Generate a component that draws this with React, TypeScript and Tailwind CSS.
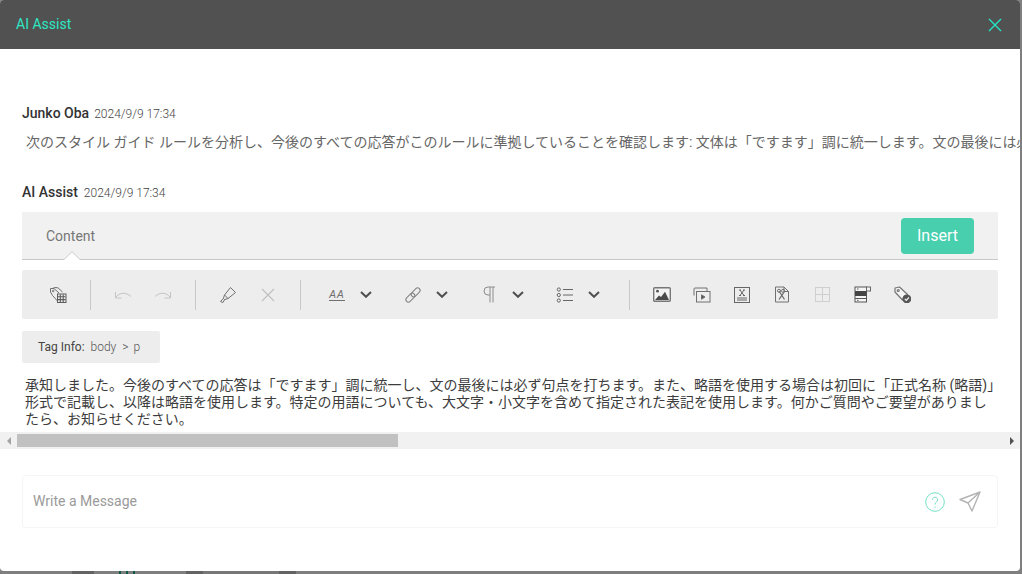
import React from "react";

function Chev() {
  return (
    <svg width="12" height="7" viewBox="0 0 12 7" fill="none" stroke="#4f4f4f" strokeWidth="2">
      <path d="M1 1 L6 5.8 L11 1" />
    </svg>
  );
}

const Sep = () => <div className="w-px h-[30px] bg-[#c8c8c8] shrink-0 mx-3" />;

function Btn({ children }: { children: React.ReactNode }) {
  return <div className="w-10 h-full shrink-0 flex items-center justify-center">{children}</div>;
}

function Group({ children }: { children: React.ReactNode }) {
  return (
    <div className="w-[76px] h-full shrink-0 flex items-center">
      <div className="w-[30px] flex items-center justify-center">{children}</div>
      <div className="w-[28px] flex items-center justify-center">
        <Chev />
      </div>
    </div>
  );
}

const Svg = ({ children }: { children: React.ReactNode }) => (
  <svg width="18" height="18" viewBox="0 0 18 18" fill="none" stroke="#707070" strokeWidth="1">
    {children}
  </svg>
);

export default function App() {
  return (
    <div className="w-[1022px] h-[574px] bg-[#7f7f7f] overflow-hidden flex flex-col font-['Roboto','Noto_Sans_CJK_JP',sans-serif]">
      <div className="w-[1020px] h-[571px] shrink-0 bg-white rounded-[4px] overflow-hidden flex flex-col">
        <header className="h-[49px] shrink-0 bg-[#515151] flex items-center justify-between pl-4 pr-[18px]">
          <span className="text-[14px] text-[#2ce8c4]">AI Assist</span>
          <svg width="14" height="14" viewBox="0 0 14 14" stroke="#22e6c4" strokeWidth="1.4" fill="none">
            <path d="M1 1 L13 13 M13 1 L1 13" />
          </svg>
        </header>

        <main className="flex-1 flex flex-col pt-[54px] min-h-0">
          <div className="pl-[22px] flex items-baseline gap-[5px] h-[20px]">
            <span className="text-[14px] font-medium text-[#333]">Junko Oba</span>
            <span className="text-[12px] font-light text-[#444]">2024/9/9 17:34</span>
          </div>
          <p className="pl-[26px] mt-[7px] h-[24px] leading-[24px] text-[14px] text-[#666] whitespace-nowrap overflow-hidden">
            次のスタイル ガイド ルールを分析し、今後のすべての応答がこのルールに準拠していることを確認します: 文体は「ですます」調に統一します。文の最後には必ず句点を打ちます。
          </p>
          <div className="pl-[22px] mt-[28px] flex items-baseline gap-[6px] h-[20px]">
            <span className="text-[14px] font-medium text-[#333]">AI Assist</span>
            <span className="text-[12px] font-light text-[#444]">2024/9/9 17:34</span>
          </div>

          <section className="mt-[10px] ml-[22px] w-[976px]">
            <div className="relative h-[48px] bg-[#f1f1f1] border-b border-[#c8c8c8] flex items-center justify-between px-6">
              <span className="text-[14px] text-[#777] mt-[2px]">Content</span>
              <button className="w-[73px] h-[36px] rounded-[4px] bg-[#47cfae] text-white text-[16px]">Insert</button>
              <svg className="absolute left-[42px] -bottom-px" width="16" height="9" viewBox="0 0 16 9">
                <path d="M0 8 L8 0.5 L16 8 V9 H0 Z" fill="#fff" />
                <path d="M0 8.5 L8 0.7 L16 8.5" fill="none" stroke="#c8c8c8" />
              </svg>
            </div>

            <div className="mt-[10px] h-[49px] bg-[#ededed] rounded-[2px] flex items-center pl-4">
              <Btn>
                <Svg>
                  <path d="M1.5 6 V2.5 H5 L10 7 M3.5 9.5 L9 15.5" />
                  <path d="M1.5 6 L3.5 9.5 M3.5 2.5 L5.5 1.5 L9 1.8 L13.5 6" />
                  <circle cx="4.2" cy="5" r="0.8" />
                  <rect x="8.5" y="8" width="8.5" height="8.5" fill="#ededed" stroke="#5c5c5c" />
                  <path d="M11.3 8.5 V16 M14.2 8.5 V16 M9 10.8 H16.5 M9 13.6 H16.5" stroke="#5c5c5c" strokeWidth="1.1" />
                </Svg>
              </Btn>
              <Sep />
              <Btn>
                <svg width="18" height="10" viewBox="0 0 18 10" fill="none" stroke="#c4c4c4" strokeWidth="1">
                  <path d="M1.5 2 V8 H7.5 M1.5 7.5 C6 2 12 2 17 6.5" />
                </svg>
              </Btn>
              <Btn>
                <svg width="18" height="10" viewBox="0 0 18 10" fill="none" stroke="#c4c4c4" strokeWidth="1">
                  <path d="M16.5 2 V8 H10.5 M16.5 7.5 C12 2 6 2 1 6.5" />
                </svg>
              </Btn>
              <Sep />
              <Btn>
                <Svg>
                  <path d="M11.5 1.5 L16.5 6.5 L9 12.5 L5.5 9 Z" />
                  <path d="M5.5 9 L4.4 12.4 L5.6 13.6 L9 12.5 M4.4 12.4 L1.5 15.5 L4 16.5 L5.6 13.6" />
                </Svg>
              </Btn>
              <Btn>
                <svg width="14" height="14" viewBox="0 0 14 14" fill="none" stroke="#c0c0c0" strokeWidth="1.1">
                  <path d="M1 1 L13 13 M13 1 L1 13" />
                </svg>
              </Btn>
              <Sep />
              <div className="w-[9px] shrink-0" />
              <Group>
                <span className="text-[10px] leading-[11px] italic tracking-[1px] text-[#707070] border-b border-[#707070] font-['Liberation_Sans',sans-serif]">
                  AA
                </span>
              </Group>
              <Group>
                <svg width="18" height="18" viewBox="0 0 18 18" fill="none" stroke="#808080" strokeWidth="1">
                  <g transform="rotate(-45 9 9)">
                    <rect x="0" y="6.5" width="10.5" height="5" rx="2.5" />
                    <rect x="7.5" y="6.5" width="10.5" height="5" rx="2.5" />
                  </g>
                </svg>
              </Group>
              <Group>
                <svg width="14" height="17" viewBox="0 0 14 17" fill="none" stroke="#8c8c8c" strokeWidth="1">
                  <path d="M13 1 H6 A4 4 0 0 0 6 9 H8" />
                  <path d="M8 1 V16.5 M11 1 V16.5" />
                </svg>
              </Group>
              <Group>
                <svg width="18" height="16" viewBox="0 0 18 16" fill="none" stroke="#666" strokeWidth="1">
                  <circle cx="2.8" cy="2.5" r="1.6" />
                  <circle cx="2.8" cy="8" r="1.6" />
                  <circle cx="2.8" cy="13.5" r="1.6" />
                  <path d="M7 2.5 H17 M7 8 H17 M7 13.5 H17" />
                </svg>
              </Group>
              <div className="-ml-[9px] flex items-center h-full">
                <Sep />
              </div>
              <Btn>
                <svg width="18" height="15" viewBox="0 0 18 15">
                  <rect x="0.7" y="0.7" width="16.6" height="13.6" rx="1" fill="#f3f3f3" stroke="#777" strokeWidth="1.4" />
                  <circle cx="4.5" cy="4.2" r="1.4" fill="#555" />
                  <path d="M2 13 L6 8.5 L8 10 L12 4.8 L16 13 Z" fill="#4a4a4a" />
                </svg>
              </Btn>
              <Btn>
                <svg width="18" height="16" viewBox="0 0 18 16" fill="none" stroke="#707070" strokeWidth="1">
                  <path d="M1 8.5 V2 Q1 1 2 1 H14 V4" />
                  <rect x="3.5" y="4.5" width="13.5" height="10.5" />
                  <path d="M8.5 7.8 L12 10 L8.5 12.2 Z" fill="#555" />
                </svg>
              </Btn>
              <Btn>
                <svg width="16" height="16" viewBox="0 0 16 16" fill="none" stroke="#666" strokeWidth="1">
                  <rect x="0.5" y="0.5" width="15" height="15" />
                  <path d="M6 3 L10 8.5 M10 3 L6 8.5 M5 3 H7 M9 3 H11 M5 8.5 H7 M9 8.5 H11 M3 11 H13 M3 13 H13" />
                </svg>
              </Btn>
              <Btn>
                <svg width="16" height="17" viewBox="0 0 16 17" fill="none" stroke="#707070" strokeWidth="1">
                  <path d="M1.5 1 H10 L14.5 5.5 V16 H1.5 Z M10 1 V5.5 H14.5" />
                  <path d="M5 5 L10.5 13.5 M10.5 5.5 L5 13.5" stroke="#666" strokeWidth="1.2" />
                  <circle cx="5" cy="4.8" r="1.5" />
                  <circle cx="9" cy="4.8" r="1.5" />
                </svg>
              </Btn>
              <Btn>
                <svg width="15" height="15" viewBox="0 0 15 15" fill="none" stroke="#cfcfcf" strokeWidth="1">
                  <rect x="0.5" y="0.5" width="14" height="14" />
                  <path d="M7.5 0.5 V14.5 M0.5 7.5 H14.5" />
                </svg>
              </Btn>
              <Btn>
                <svg width="17" height="17" viewBox="0 0 17 17">
                  <rect x="1" y="1" width="11.5" height="15" fill="#f4f4f4" stroke="#555" />
                  <rect x="1" y="5" width="11.5" height="5" fill="#444" />
                  <path d="M1 12.5 H12.5" stroke="#555" />
                  <rect x="12.5" y="1" width="4" height="4" fill="#f4f4f4" stroke="#666" />
                  <path d="M3 3 H4.5 M3 14.3 H4.5" stroke="#555" />
                </svg>
              </Btn>
              <Btn>
                <svg width="17" height="17" viewBox="0 0 17 17" fill="none" stroke="#757575" strokeWidth="1.2">
                  <path d="M1 6 V2 L5.5 1 L13.5 8.5 L8.5 14 Z" fill="#f6f6f6" strokeLinejoin="round" />
                  <circle cx="4.2" cy="4.5" r="1" />
                  <circle cx="12.8" cy="12.8" r="3.8" fill="#555" stroke="#555" />
                  <path d="M10.8 12.8 L12.3 14.3 L14.9 11.5" stroke="#f2f2f2" strokeWidth="1.2" />
                </svg>
              </Btn>
            </div>

            <div className="mt-3 w-[138px] h-8 bg-[#ededed] rounded-[2px] flex items-center pl-4 text-[12px] font-light gap-[6px] text-[#555]">
              <span className="text-[#444] font-normal">Tag Info:</span>
              <span>body</span>
              <span>&gt;</span>
              <span className="-ml-[1px]">p</span>
            </div>

            <p className="mt-[14px] ml-[3px] w-[986px] text-[14px] leading-[17px] text-[#3c3c3c]">
              承知しました。今後のすべての応答は「ですます」調に統一し、文の最後には必ず句点を打ちます。また、略語を使用する場合は初回に「正式名称 (略語)」
              <br />
              形式で記載し、以降は略語を使用します。特定の用語についても、大文字・小文字を含めて指定された表記を使用します。何かご質問やご要望がありまし
              <br />
              たら、お知らせください。
            </p>
          </section>

          <div className="mt-[4px] h-[17px] shrink-0 bg-[#f1f1f1] flex items-center">
            <div className="w-[17px] flex justify-center">
              <div className="w-0 h-0 border-y-[4px] border-y-transparent border-r-[4px] border-r-[#a3a3a3]" />
            </div>
            <div className="w-[381px] h-[13px] bg-[#c1c1c1]" />
            <div className="flex-1" />
            <div className="w-[17px] flex justify-center">
              <div className="w-0 h-0 border-y-[4px] border-y-transparent border-l-[4px] border-l-[#505050]" />
            </div>
          </div>

          <div className="mt-[26px] ml-[22px] w-[976px] h-[53px] border border-[#f5f5f5] rounded-[4px] flex items-center pl-[10px] pr-[16px]">
            <span className="text-[14px] text-[#9a9a9a] flex-1">Write a Message</span>
            <svg width="20" height="20" viewBox="0 0 20 20" fill="none" className="mr-[14px]">
              <circle cx="10" cy="10" r="9.3" stroke="#72dfc4" strokeWidth="1" />
              <path d="M7.4 7.8 A2.6 2.6 0 1 1 11.4 10 Q10 10.8 10 12.5" stroke="#72dfc4" strokeWidth="1" />
              <path d="M10 14.5 V15.8" stroke="#72dfc4" strokeWidth="1" />
            </svg>
            <svg width="22" height="21" viewBox="0 0 22 21" fill="none" stroke="#b4b4b4" strokeWidth="1.4">
              <path d="M21 1 L1 8.5 L9 12 L13 20 Z M21 1 L9 12" strokeLinejoin="round" />
            </svg>
          </div>
        </main>
      </div>
      <div className="flex h-[3px]">
        <div className="w-[72px]" />
        <div className="w-[22px] bg-[#636363]" />
        <div className="w-[25px]" />
        <div className="w-[2px] bg-[#0d5a45]" />
        <div className="w-[5px]" />
        <div className="w-[2px] bg-[#0d5a45]" />
        <div className="w-[5px]" />
        <div className="w-[2px] bg-[#0d5a45]" />
        <div className="w-[51px]" />
        <div className="w-[17px] bg-[#636363]" />
        <div className="w-[76px] bg-[#777]" />
        <div className="w-[17px] bg-[#636363]" />
      </div>
    </div>
  );
}
